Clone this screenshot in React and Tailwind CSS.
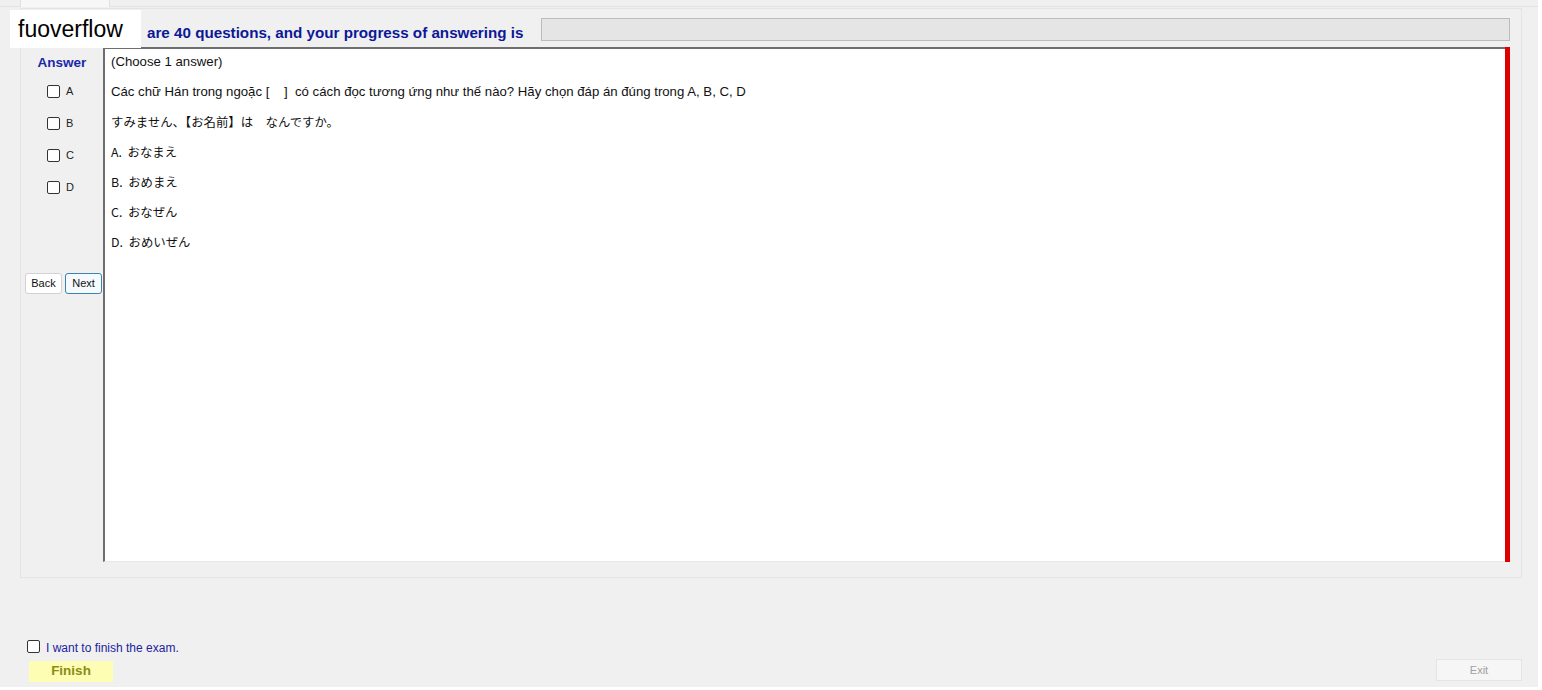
import React from 'react'

const choices = ['A', 'B', 'C', 'D']

const lines = [
  { text: '(Choose 1 answer)', jp: false },
  { text: 'Các chữ Hán trong ngoặc [    ]  có cách đọc tương ứng như thế nào? Hãy chọn đáp án đúng trong A, B, C, D', jp: false },
  { text: 'すみません、【お名前】は　なんですか。', jp: true },
  { text: 'A.  おなまえ', jp: true },
  { text: 'B.  おめまえ', jp: true },
  { text: 'C.  おなぜん', jp: true },
  { text: 'D.  おめいぜん', jp: true },
]

function Box() {
  return <span className="inline-block w-[13px] h-[13px] border border-[#333] rounded-[2px] bg-white" />
}

export default function App() {
  return (
    <div className="w-[1542px] h-[690px] bg-white relative font-['Liberation_Sans',Arial,sans-serif]">
      <div className="w-[1538px] h-[687px] bg-[#f0f0f0] flex flex-col">
        {/* tab strip */}
        <div className="h-[7px] flex border-b border-[#e2e2e2]">
          <div className="ml-[20px] w-[90px] h-[7px] bg-[#f7f7f7] border-x border-[#e0e0e0]" />
        </div>

        {/* group box */}
        <div className="ml-[20px] w-[1502px] h-[570px] mt-[1px] border border-[#e4e4e4] flex flex-col">
          <div className="h-[38px] flex items-start">
            <div className="w-[126px] shrink-0" />
            <div className="mt-[15px] text-[15.2px] font-bold text-[#0c1898] leading-[17px] whitespace-nowrap">
              are 40 questions, and your progress of answering is
            </div>
            <div className="ml-[18px] mr-[11px] mt-[9px] flex-1 h-[23px] bg-[#e5e5e5] border border-[#bcbcbc]" />
          </div>

          <div className="flex h-[515px]">
            {/* left column */}
            <div className="w-[82px] shrink-0 flex flex-col">
              <div className="h-[28px] flex items-center justify-center pt-[4px] text-[13.5px] font-bold text-[#1a28a8]">Answer</div>
              {choices.map(c => (
                <div key={c} className="h-[32px] flex items-center pl-[26px] gap-[6px] text-[11px] text-[#222]">
                  <Box />
                  <span>{c}</span>
                </div>
              ))}
              <div className="mt-[70px] flex gap-[3px] pl-[4px]">
                <button className="w-[37px] h-[21px] bg-white border border-[#d2d2d2] rounded-[3px] text-[11px] text-[#111]">Back</button>
                <button className="w-[37px] h-[21px] bg-[#f4fafd] border border-[#3c83b0] rounded-[3px] text-[11px] text-[#111]">Next</button>
              </div>
            </div>

            {/* content */}
            <div className="flex-1 bg-white border-l-2 border-t-2 border-[#6e6e6e] border-b border-b-[#e8e8e8]">
              <div className="-mt-[2px] pl-[6px] text-[13.2px] text-[#111]">
                {lines.map((l, i) => (
                  <div
                    key={i}
                    className={`h-[30px] leading-[30px] whitespace-pre ${l.jp ? "font-['Noto_Sans_CJK_JP',sans-serif] text-[12.4px]" : ''}`}
                  >
                    {l.text}
                  </div>
                ))}
              </div>
            </div>
            <div className="w-[5px] bg-[#dd0000]" />
            <div className="w-[11px]" />
          </div>
        </div>

        {/* footer */}
        <div className="flex-1 flex flex-col justify-end pb-[5px]">
          <div className="flex items-center gap-[6px] pl-[27px] text-[12px] text-[#2222a0]">
            <Box />
            <span className="mt-[3px]">I want to finish the exam.</span>
          </div>
          <div className="flex items-end justify-between mt-[2px]">
            <button className="ml-[29px] w-[84px] h-[21px] bg-[#fdfdb4] text-[13.5px] font-bold text-[#8c8c14]">Finish</button>
            <button className="mr-[16px] w-[86px] h-[22px] mb-[1px] bg-[#f6f6f6] border border-[#e4e4e4] text-[11px] text-[#a0a0a0]">Exit</button>
          </div>
        </div>
      </div>

      {/* watermark overlay */}
      <div className="absolute left-[10px] top-[10px] w-[131px] h-[38px] bg-white flex items-center pl-[8px] text-[23px] text-black leading-none">
        fuoverflow
      </div>
    </div>
  )
}
